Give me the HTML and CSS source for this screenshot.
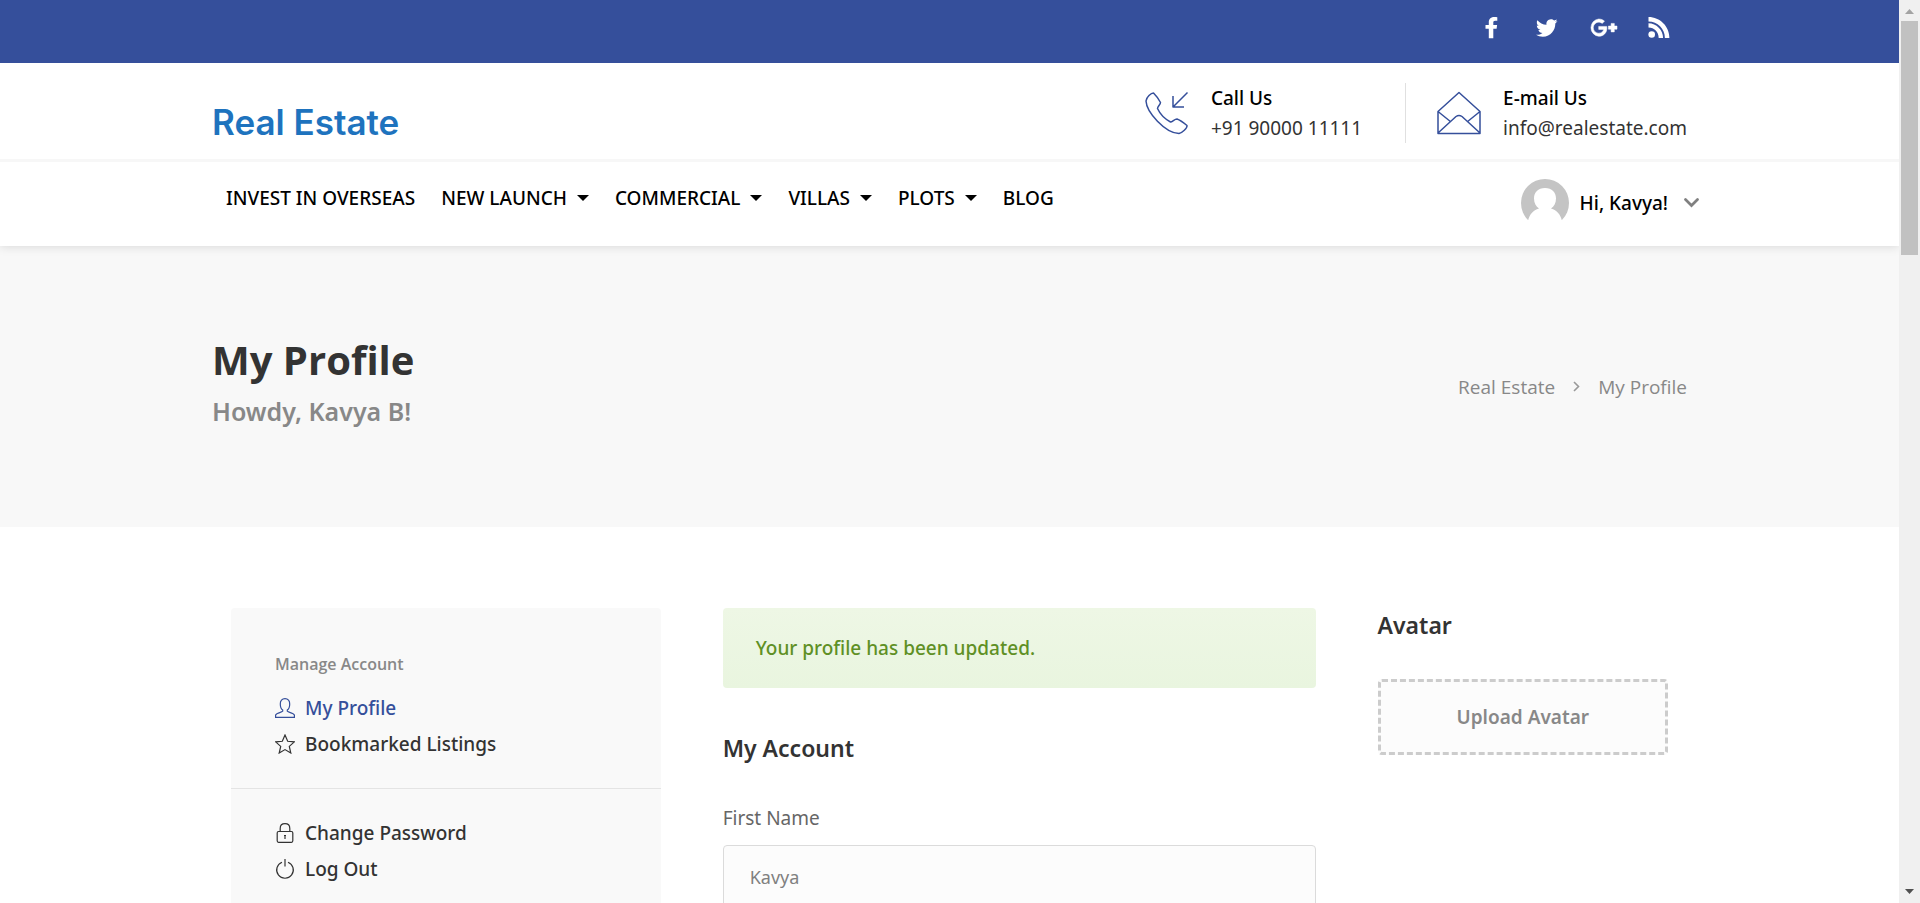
FILE: index.html
```html
<!DOCTYPE html>
<html lang="en">
<head>
<meta charset="utf-8">
<title>My Profile - Real Estate</title>
<link rel="stylesheet" href="styles.css">
</head>
<body>
<div class="page">
  <header class="header">
    <div class="top-bar">
      <div class="container top-bar-inner">
        <a href="#" class="social" aria-label="Facebook"><svg width="13" height="22" viewBox="0 0 13 22"><path d="M12.300 0.200V3.700H10.200C8.600 3.700 8.300 4.500 8.300 5.600V8H12.100L11.600 11.700H8.300V21.300H3.800V11.700H0.500V8H3.800V5.100C3.800 1.800 6.200 0 9.400 0C10.800 0 12 0.100 12.300 0.200Z"/></svg></a>
        <a href="#" class="social" aria-label="Twitter"><svg width="22" height="18" viewBox="0 0 22 18"><path d="M21.500 2.100C20.900 3 20.200 3.800 19.300 4.400V5C19.300 10.900 14.900 17.700 6.800 17.700C4.300 17.700 2 17 0 15.700C2.400 16 4.700 15.300 6.500 13.900C4.500 13.900 2.900 12.600 2.400 10.900C3.100 11 3.700 11 4.400 10.800C2.300 10.400 0.800 8.600 0.800 6.500C1.400 6.800 2.100 7 2.800 7C0.900 5.700 0.200 3.200 1.400 1.200C3.600 3.900 6.900 5.600 10.500 5.800C9.900 3 11.900 0.200 14.900 0.200C16.200 0.200 17.300 0.700 18.100 1.500C19.100 1.300 20.100 0.900 20.900 0.500C20.600 1.500 19.900 2.400 19 2.900C19.900 2.800 20.700 2.500 21.500 2.100Z"/></svg></a>
        <a href="#" class="social" aria-label="Google Plus"><svg width="27" height="18" viewBox="0 0 27 18"><path stroke="#fff" stroke-width="0.500" d="M16.900 8.900C16.900 13.800 13.600 17.300 8.700 17.300A8.700 8.700 0 0 1 8.700 0C11 0 13 0.800 14.500 2.200L12.100 4.500C11.500 3.900 10.400 3.200 8.700 3.200C5.700 3.200 3.300 5.700 3.300 8.700C3.300 11.700 5.700 14.200 8.700 14.200C12.100 14.200 13.400 11.700 13.600 10.400H8.700V7.400H16.700C16.800 7.900 16.900 8.300 16.900 8.900ZM27 7V10.200H24.300V12.900H21.100V10.200H18.400V7H21.100V4.400H24.300V7Z"/></svg></a>
        <a href="#" class="social" aria-label="RSS"><svg width="22" height="22" viewBox="0 0 22 22"><circle cx="3.700" cy="17.500" r="3.300"/><path d="M0.500 6.200V10.600C6.200 10.600 10.700 15.200 10.700 20.900H15.100C15.100 13 8.400 6.200 0.500 6.200ZM0.500 0V4.500C9.500 4.500 16.900 11.900 16.900 20.900H21.400C21.400 9.400 12 0 0.500 0Z"/></svg></a>
      </div>
    </div>
    <div class="brand-bar">
      <div class="container brand-inner">
        <a href="#" class="logo">Real Estate</a>
        <ul class="contacts">
          <li class="contact">
            <svg class="line-icon" width="44" height="44" viewBox="0 0 44 44"><path d="M8.500 2C10 3.500 14 8.500 15.500 11.500C15.500 13.500 12.500 15.500 12.500 17.500C15 23 20 28 25.500 31C27.500 31 29.500 28 32 28C35 29 39 32 42 34.500C42.500 37 37 42 34 42.500C20 42 1.500 21 1 10C1.500 6 6 2 8.500 2ZM42.500 1.500L28 16M28 5V16H39"/></svg>
            <div class="contact-text"><strong>Call Us</strong><span>+91 90000 11111</span></div>
          </li>
          <li class="contact">
            <svg class="line-icon" width="44" height="44" viewBox="0 0 44 44"><path d="M1 20.500L22 1.500L43 20.500V42.500H1ZM1 20.500L14 31M43 20.500L30 31M1 42L19 25.500Q22 23.500 25 25.500L43 42"/></svg>
            <div class="contact-text"><strong>E-mail Us</strong><span>info@realestate.com</span></div>
          </li>
        </ul>
      </div>
    </div>
    <div class="container nav-inner">
      <nav class="nav" aria-label="Main">
        <a href="#">INVEST IN OVERSEAS</a>
        <a href="#" class="has-menu">NEW LAUNCH</a>
        <a href="#" class="has-menu">COMMERCIAL</a>
        <a href="#" class="has-menu">VILLAS</a>
        <a href="#" class="has-menu">PLOTS</a>
        <a href="#">BLOG</a>
      </nav>
      <button type="button" class="user-menu">
        <svg width="48" height="48" viewBox="0 0 48 48"><defs><clipPath id="round"><circle cx="24" cy="24" r="24"/></clipPath></defs><g clip-path="url(#round)"><path fill="#c4c4c4" d="M0 0H48V41H0Z"/><path fill="#fff" d="M24 9C31 9 35 13.500 35 19.500C35 24 33 27.500 30 29.500C36 31.500 39.500 35 41 42H7C8.500 35 12 31.500 18 29.500C15 27.500 13 24 13 19.500C13 13.500 17 9 24 9Z"/></g></svg>
        <span>Hi, Kavya!</span>
        <svg width="15" height="10" viewBox="0 0 15 10"><path d="M1.500 1.500L7.500 7.500L13.500 1.500" fill="none" stroke="#808080" stroke-width="2.700" stroke-linecap="round"/></svg>
      </button>
    </div>
  </header>

  <section class="title-bar">
    <div class="container title-inner">
      <div>
        <h1>My Profile</h1>
        <p class="greeting">Howdy, Kavya B!</p>
      </div>
      <nav class="crumbs" aria-label="Breadcrumb">
        <a href="#">Real Estate</a>
        <svg width="7" height="11" viewBox="0 0 7 11"><path d="M1 1L5.500 5.500L1 10" fill="none" stroke="#999" stroke-width="1.600"/></svg>
        <span>My Profile</span>
      </nav>
    </div>
  </section>

  <main class="container content">
    <aside class="sidebar">
      <div class="side-group">
        <h2 class="side-title">Manage Account</h2>
        <ul>
          <li><a href="#" class="current"><svg width="20" height="20" viewBox="0 0 20 20"><path d="M10 0.700C13 0.700 14.800 2.800 14.700 6C14.700 9 13.600 11.200 12.300 12V13.200C13.500 14.600 19 15 19.400 17.200V19.300H0.600V17.200C1 15 6.500 14.600 7.700 13.200V12C6.400 11.200 5.300 9 5.300 6C5.200 2.800 7 0.700 10 0.700Z"/></svg>My Profile</a></li>
          <li><a href="#"><svg width="20" height="20" viewBox="0 0 20 20"><path d="M10 1L12.700 7.300L19.300 7.900L14.300 12.400L15.800 19L10 15.600L4.200 19L5.700 12.400L0.700 7.900L7.300 7.300Z"/></svg>Bookmarked Listings</a></li>
        </ul>
      </div>
      <div class="side-group">
        <ul>
          <li><a href="#"><svg width="20" height="20" viewBox="0 0 20 20"><path d="M3.500 8.500H16.500Q17.800 8.500 17.800 10V17.800Q17.800 19.300 16.500 19.300H3.500Q2.200 19.300 2.200 17.800V10Q2.200 8.500 3.500 8.500ZM5.200 8.500V5.500C5.200 2.500 7 0.700 10 0.700C13 0.700 14.800 2.500 14.800 5.500V8.500M9 12.500H11M10 12.500V16"/></svg>Change Password</a></li>
          <li><a href="#"><svg width="20" height="20" viewBox="0 0 20 20"><path d="M10 0V7.500M7 3.200A8.300 8.300 0 1 0 13 3.200"/></svg>Log Out</a></li>
        </ul>
      </div>
    </aside>

    <form class="account">
      <p class="notice" role="status">Your profile has been updated.</p>
      <h2>My Account</h2>
      <label for="first-name">First Name</label>
      <input id="first-name" type="text" value="Kavya">
    </form>

    <section class="avatar">
      <h2>Avatar</h2>
      <button type="button" class="upload">Upload Avatar</button>
    </section>
  </main>
</div>
<div class="scrollbar" aria-hidden="true">
  <svg width="9" height="5" viewBox="0 0 9 5"><path fill="#a3a3a3" d="M0 5L4.500 0L9 5Z"/></svg>
  <div class="track"><div class="thumb"></div></div>
  <svg width="9" height="5" viewBox="0 0 9 5"><path fill="#505050" d="M0 0L4.500 5L9 0Z"/></svg>
</div>
</body>
</html>
```

FILE: styles.css
```css
* { box-sizing: border-box; }
body {
  margin: 0;
  display: flex;
  height: 100vh;
  overflow: hidden;
  background: #fff;
  color: #333;
  font: 400 19px/30px "Noto Sans", "Open Sans", sans-serif;
}
a { color: inherit; text-decoration: none; }
ul { list-style: none; margin: 0; padding: 0; }
h1, h2, p { margin: 0; }
button, input { font: inherit; }
button { cursor: pointer; }
.page { flex: 1; min-width: 0; overflow: hidden; }
.container { width: 100%; max-width: 1475px; margin: 0 auto; }

.header { position: relative; background: #fff; box-shadow: 0 0 10px rgba(0, 0, 0, 0.15); }
.top-bar { background: #354f9b; }
.top-bar-inner { display: flex; justify-content: flex-end; min-height: 63px; padding-bottom: 8px; }
.social { display: flex; align-items: center; justify-content: center; width: 56px; }
.social svg { fill: #fff; overflow: visible; }

.brand-bar { border-bottom: 3px solid #f7f7f7; }
.brand-inner { display: flex; justify-content: space-between; align-items: flex-start; padding: 20px 0 16px; }
.logo { color: #1e73be; font: 600 35px/42px Inter, sans-serif; padding-top: 18px; }
.contacts { display: flex; }
.contact { display: flex; align-items: center; gap: 22px; }
.contact + .contact { margin-left: 43px; padding-left: 31px; border-left: 1px solid #e0e0e0; }
.line-icon { fill: none; stroke: #354f9b; stroke-width: 1.5; stroke-linejoin: round; }
.contact-text { display: flex; flex-direction: column; }
.contact-text strong { color: #000; font-weight: 500; }

.nav-inner { display: flex; justify-content: space-between; align-items: flex-start; min-height: 84px; padding: 17px 0; }
.nav { display: flex; gap: 26px; padding: 4px 14px; color: #000; font-weight: 500; }
.nav a { display: flex; align-items: center; gap: 10px; }
.has-menu::after { content: ""; border: 6px solid transparent; border-top-color: #000; border-bottom: 0; }
.user-menu { display: flex; align-items: center; gap: 11px; margin-right: -12px; padding: 0; border: 0; background: none; color: #000; font-weight: 500; }
.user-menu span { margin-right: 5px; }

.title-bar { background: #f8f8f8; }
.title-inner { display: flex; justify-content: space-between; align-items: center; padding: 85px 0 93px; }
h1 { font: 700 40px/58px "Open Sans", sans-serif; }
.greeting { color: #888; font-size: 25px; line-height: 45px; font-weight: 600; }
.crumbs { display: flex; align-items: center; gap: 18px; padding-top: 8px; color: #888; font-family: "Open Sans", sans-serif; }

.content { display: grid; grid-template-columns: 429fr 592fr 290fr; gap: 62px; padding: 81px 19px; align-items: start; }
.sidebar { background: #f9f9f9; border-radius: 4px; }
.side-group { padding: 26px 44px; }
.side-group:first-child { padding-top: 38px; }
.side-group + .side-group { border-top: 1px solid #e4e4e4; min-height: 200px; }
.side-title { color: #888; font: 600 16px/36px "Open Sans", sans-serif; padding-bottom: 8px; }
.side-group a { display: flex; align-items: center; gap: 10px; line-height: 36px; font-weight: 500; }
.side-group svg { fill: none; stroke: currentColor; stroke-width: 1.2; }
.side-group .current { color: #354f9b; }

.notice { padding: 25px 33px; border-radius: 4px; background: linear-gradient(#eef7e5, #e9f5df); color: #5f9025; font-weight: 500; }
.account h2, .avatar h2 { font-size: 23px; line-height: 34px; font-weight: 600; }
.account h2 { padding: 43px 0 38px; }
.account label { display: block; color: #666; padding-bottom: 12px; }
.account input { width: 100%; height: 64px; padding: 0 26px; border: 1px solid #dbdbdb; border-radius: 4px; background: #fcfcfc; color: #808080; font-size: 18px; }
.upload { width: 100%; margin-top: 37px; padding: 20px; border: 3px dashed #ccc; border-radius: 4px; background: #fcfcfc; color: #888; font-weight: 600; }

.scrollbar { flex: 0 0 21px; display: flex; flex-direction: column; align-items: center; justify-content: space-between; padding: 9px 0; background: #f0f0f0; }
.track { flex: 1; padding: 7px 0; }
.thumb { width: 17px; height: 27.2%; background: #c1c1c1; }
```
